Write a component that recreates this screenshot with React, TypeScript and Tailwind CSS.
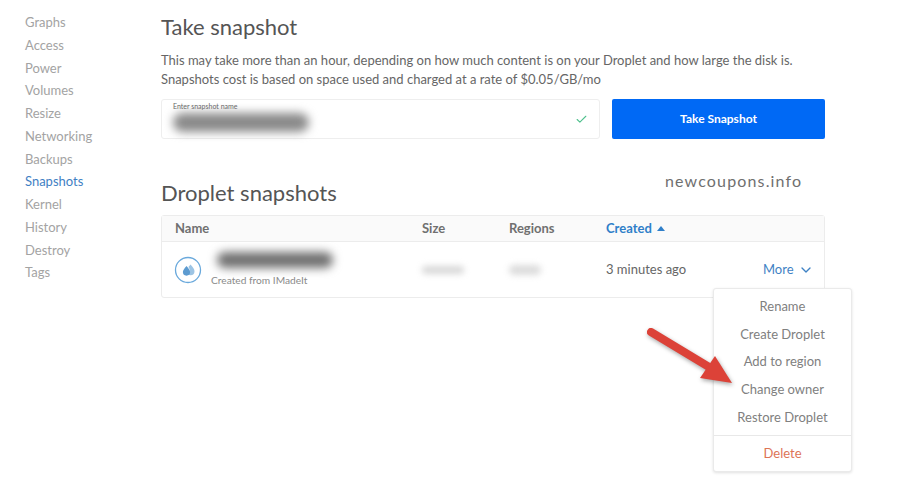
import { type FC } from 'react';
import { Check, ChevronDown } from 'lucide-react';

const NAV_ITEMS = ['Graphs', 'Access', 'Power', 'Volumes', 'Resize', 'Networking', 'Backups', 'Snapshots', 'Kernel', 'History', 'Destroy', 'Tags'];
const MENU_ITEMS = ['Rename', 'Create Droplet', 'Add to region', 'Change owner', 'Restore Droplet'];

const DropletIcon: FC = () => (
  <svg width="28" height="28" viewBox="0 0 28 28" className="shrink-0">
    <circle cx="14" cy="14" r="12.5" fill="#fff" stroke="#6aa9dc" strokeWidth="1.3" />
    <path d="M16.5 8.5c2.6 2.8 4 4.8 4 6.8a4 4 0 0 1-4 4c-.9 0-1.700-.3-2.300-.8 2-1.500 2.300-4.500.2-7.500z" fill="#9cc4e4" />
    <path d="M12.500 10c2.300 2.600 3.600 4.400 3.600 6.100a3.600 3.600 0 0 1-7.200 0c0-1.700 1.300-3.500 3.600-6.100z" fill="#5d9bd0" />
  </svg>
);

const App: FC = () => {
  return (
    <div className="relative flex h-[504px] w-[900px] overflow-hidden bg-white font-['Lato',sans-serif] text-[#777]">
      <nav className="flex w-[160px] shrink-0 flex-col pl-[25px] pt-[11px]">
        {NAV_ITEMS.map((item) => (
          <a
            key={item}
            className={`h-[22.75px] text-[13px] leading-[22.75px] ${item === 'Snapshots' ? 'text-[#3f7fc4]' : 'text-[#a3a3a3]'}`}
          >
            {item}
          </a>
        ))}
      </nav>

      <main className="flex w-[665px] flex-col pt-[14px]">
        <h1 className="pl-px text-[22px] leading-[26px] text-[#555]">Take snapshot</h1>
        <p className="mt-[11px] pl-px text-[13px] leading-[19px] text-[#666]">
          This may take more than an hour, depending on how much content is on your Droplet and how large the disk is.
          <br />
          Snapshots cost is based on space used and charged at a rate of $0.05/GB/mo
        </p>

        <div className="mt-[10px] flex h-[40px] gap-[12px]">
          <div className="relative ml-px flex w-[439px] items-center justify-end rounded-[3px] border border-[#eeeeee] pr-[11px]">
            <span className="absolute left-[11px] top-[2px] text-[7px] leading-[9px] text-[#666]">Enter snapshot name</span>
            <div className="absolute left-[11px] top-[13px] h-[19px] w-[136px] rounded-full bg-[#8a8a8a] blur-[5px]" />
            <Check size={13} strokeWidth={2} className="text-[#4fc08d]" />
          </div>
          <button type="button" className="flex-1 rounded-[2px] bg-[#0069f5] text-[12px] font-bold text-white">
            Take Snapshot
          </button>
        </div>

        <h2 className="mt-[41px] pl-px text-[22px] leading-[26px] text-[#555]">Droplet snapshots</h2>

        <div className="ml-px mt-[9px] rounded-[3px] border border-[#ececec] text-[13px]">
          <div className="flex h-[26px] items-center border-b border-[#ececec] bg-[#fafafa] font-bold text-[#707070]">
            <span className="w-[260px] pl-[13px]">Name</span>
            <span className="w-[87px]">Size</span>
            <span className="w-[97px]">Regions</span>
            <span className="flex items-center gap-[5px] text-[#2f7fc9]">
              Created
              <span className="h-0 w-0 border-x-[4px] border-b-[5px] border-x-transparent border-b-[#2f7fc9]" />
            </span>
          </div>
          <div className="flex h-[55px] items-center">
            <div className="flex w-[260px] items-center gap-[9px] pl-[12px]">
              <DropletIcon />
              <div className="relative h-[40px] flex-1">
                <div className="absolute left-[6px] top-[2px] h-[16px] w-[116px] rounded-full bg-[#707070] blur-[5px]" />
                <span className="absolute bottom-[4px] left-0 text-[10.200px] leading-[12px] text-[#8a8a8a]">Created from IMadeIt</span>
              </div>
            </div>
            <div className="w-[87px]">
              <div className="h-[8px] w-[42px] rounded-full bg-[#d8d8d8] blur-[3px]" />
            </div>
            <div className="w-[97px]">
              <div className="h-[10px] w-[32px] rounded-full bg-[#dcdcdc] blur-[3px]" />
            </div>
            <span className="w-[157px] text-[#666]">3 minutes ago</span>
            <span className="flex items-center gap-[4px] text-[#3f82c4]">
              More
              <ChevronDown size={16} strokeWidth={2} />
            </span>
          </div>
        </div>
      </main>

      <div className="absolute left-[665px] top-[171px] text-[16px] leading-[20px] tracking-[1.150px] text-[#6f6f6f]">newcoupons.info</div>

      <div className="absolute left-[713px] top-[288px] w-[139px] rounded-[3px] border border-[#eaeaea] bg-white text-center text-[13px] text-[#808080] shadow-[0_1px_3px_rgba(0,0,0,0.12)]">
        <ul className="flex flex-col pb-[4px] pt-[4px]">
          {MENU_ITEMS.map((item) => (
            <li key={item} className="h-[27.700px] leading-[27.700px]">{item}</li>
          ))}
        </ul>
        <div className="h-[36px] border-t border-[#e8e8e8] leading-[35px] text-[#dd7456]">Delete</div>
      </div>

      <svg className="absolute left-[640px] top-[320px] drop-shadow-[1px_2px_2px_rgba(0,0,0,0.35)]" width="100" height="70" viewBox="0 0 100 70">
        <path d="M11 12 L74 50" stroke="#dc4238" strokeWidth="8" strokeLinecap="round" />
        <path d="M75 36 L92 63 L60 58 Z" fill="#dc4238" />
      </svg>
    </div>
  );
};

export default App;
